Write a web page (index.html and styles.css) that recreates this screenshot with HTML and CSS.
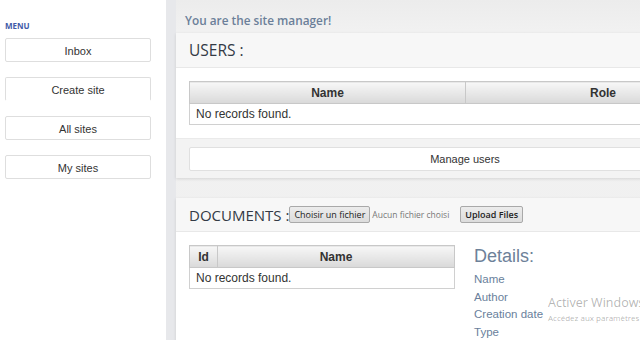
FILE: index.html
```html
<!DOCTYPE html>
<html>
<head>
<meta charset="utf-8">
<link rel="stylesheet" href="styles.css">
</head>
<body>
<div class="page">
  <aside class="sidebar">
    <div class="menu-title">MENU</div>
    <nav class="menu">
      <a class="menu-btn">Inbox</a>
      <a class="menu-btn no-bottom">Create site</a>
      <a class="menu-btn">All sites</a>
      <a class="menu-btn">My sites</a>
    </nav>
  </aside>
  <div class="gutter"></div>
  <main class="main">
    <h2 class="welcome">You are the site manager!</h2>
    <section class="panel">
      <div class="panel-head"><h3 class="panel-title">USERS :</h3></div>
      <div class="panel-body">
        <table class="grid users">
          <thead><tr><th class="col-name">Name</th><th>Role</th></tr></thead>
          <tbody><tr><td colspan="2">No records found.</td></tr></tbody>
        </table>
      </div>
      <div class="panel-foot">
        <button class="wide-btn">Manage users</button>
      </div>
    </section>
    <section class="panel docs">
      <div class="panel-head head-row">
        <h3 class="panel-title">DOCUMENTS :</h3>
        <span class="file-btn">Choisir un fichier</span>
        <span class="file-none">Aucun fichier choisi</span>
        <span class="file-btn upload">Upload Files</span>
      </div>
      <div class="panel-body docs-body">
        <table class="grid docs-table">
          <thead><tr><th class="col-id">Id</th><th>Name</th></tr></thead>
          <tbody><tr><td colspan="2">No records found.</td></tr></tbody>
        </table>
        <div class="details">
          <div class="details-title">Details:</div>
          <div class="detail">Name</div>
          <div class="detail">Author</div>
          <div class="detail">Creation date</div>
          <div class="detail">Type</div>
        </div>
      </div>
    </section>
  </main>
</div>
<div class="watermark">
  <div class="wm-title">Activer Windows</div>
  <div class="wm-sub">Accédez aux paramètres</div>
</div>
</body>
</html>
```
FILE: styles.css
```css
* { box-sizing: border-box; }
html, body { margin: 0; padding: 0; }
body {
  width: 640px;
  height: 340px;
  overflow: hidden;
  font-family: "Liberation Sans", Arial, sans-serif;
  color: #333;
  background: #f0f0f0;
}
.page {
  display: flex;
  height: 340px;
  width: 640px;
  overflow: hidden;
}
.sidebar {
  width: 166px;
  flex: none;
  background: #fff;
  padding-top: 20px;
}
.menu-title {
  font-family: "Open Sans", sans-serif;
  font-size: 8px;
  font-weight: 700;
  color: #3f5aa8;
  padding-left: 5px;
  height: 18px;
  line-height: 12px;
}
.menu {
  display: flex;
  flex-direction: column;
  gap: 15px;
  padding-left: 5px;
}
.menu-btn {
  display: block;
  width: 146px;
  height: 24px;
  line-height: 24px;
  border: 1px solid #dedede;
  border-radius: 2px;
  text-align: center;
  font-size: 11px;
  color: #333;
  background: #fff;
}
.menu-btn.no-bottom { border-bottom-color: #fff; }
.gutter {
  width: 10px;
  flex: none;
  background: #e7e8eb;
}
.main {
  flex: none;
  width: 600px;
  background: linear-gradient(#ececec, #f1f1f1 30px, #f0f0f0);
}
.welcome {
  margin: 0;
  padding: 12px 0 0 9px;
  height: 33px;
  font-family: "Open Sans", sans-serif;
  font-size: 11.8px;
  font-weight: 600;
  color: #6b7f99;
  line-height: 17px;
}
.panel {
  width: 578px;
  background: #f7f7f7;
  box-shadow: 0 1px 3px rgba(0,0,0,0.12);
}
.panel-head {
  height: 35px;
  padding: 0 13px;
  background: #f7f7f7;
  border-bottom: 1px solid #e8e8e8;
  display: flex;
  align-items: center;
}
.panel-title {
  margin: 0;
  font-family: "Open Sans", sans-serif;
  font-weight: 400;
  font-size: 15.5px;
  color: #333a45;
}
.panel-body {
  background: #fff;
  padding: 13px 13px 13px;
}
.grid {
  border-collapse: collapse;
  width: 552px;
  font-size: 12px;
}
.grid th {
  height: 22px;
  padding: 0;
  font-weight: 700;
  color: #333;
  background: linear-gradient(#f7f7f7, #d9d9d9);
  border: 1px solid #c8c8c8;
  text-align: center;
}
.grid td {
  height: 21px;
  padding: 0 6px;
  border: 1px solid #d0d0d0;
  color: #333;
  background: #fff;
}
.users .col-name { width: 276px; }
.panel-foot {
  padding: 8px 13px 7px;
  background: #f3f3f3;
  border-top: 1px solid #eaeaea;
}
.wide-btn {
  display: block;
  width: 552px;
  height: 24px;
  border: 1px solid #e0e0e0;
  border-radius: 2px;
  background: #fff;
  font-family: "Liberation Sans", Arial, sans-serif;
  font-size: 11px;
  color: #333;
  padding: 0;
}
.docs { margin-top: 20px; height: 200px; }
.docs .panel-head { height: 34px; }
.docs .panel-title { font-size: 15px; margin-right: 0; }
.file-btn {
  font-family: "Open Sans", sans-serif;
  font-size: 9px;
  color: #222;
  background: linear-gradient(#ececec, #dcdcdc);
  border: 1px solid #a9a9a9;
  border-radius: 2px;
  height: 17px;
  line-height: 15px;
  padding: 0 4px;
}
.file-none {
  font-family: "Open Sans", sans-serif;
  font-size: 8.5px;
  color: #777;
  margin: 0 11px 0 2px;
}
.upload { font-weight: 600; }
.docs-body {
  display: flex;
  gap: 19px;
  height: 166px;
}
.docs-table { width: 266px; align-self: flex-start; }
.docs-table .col-id { width: 28px; }
.details-title {
  font-size: 18px;
  color: #6d8199;
  height: 22px;
  line-height: 22px;
  margin-bottom: 4px;
}
.detail {
  font-size: 11.5px;
  line-height: 17.5px;
  color: #6a7f9c;
}
.watermark {
  position: absolute;
  left: 548px;
  top: 295px;
  white-space: nowrap;
  font-family: "Open Sans", sans-serif;
  color: rgba(0,0,0,0.3);
}
.wm-title { font-size: 12.5px; line-height: 16px; }
.wm-sub { font-size: 8px; line-height: 13px; }
```
